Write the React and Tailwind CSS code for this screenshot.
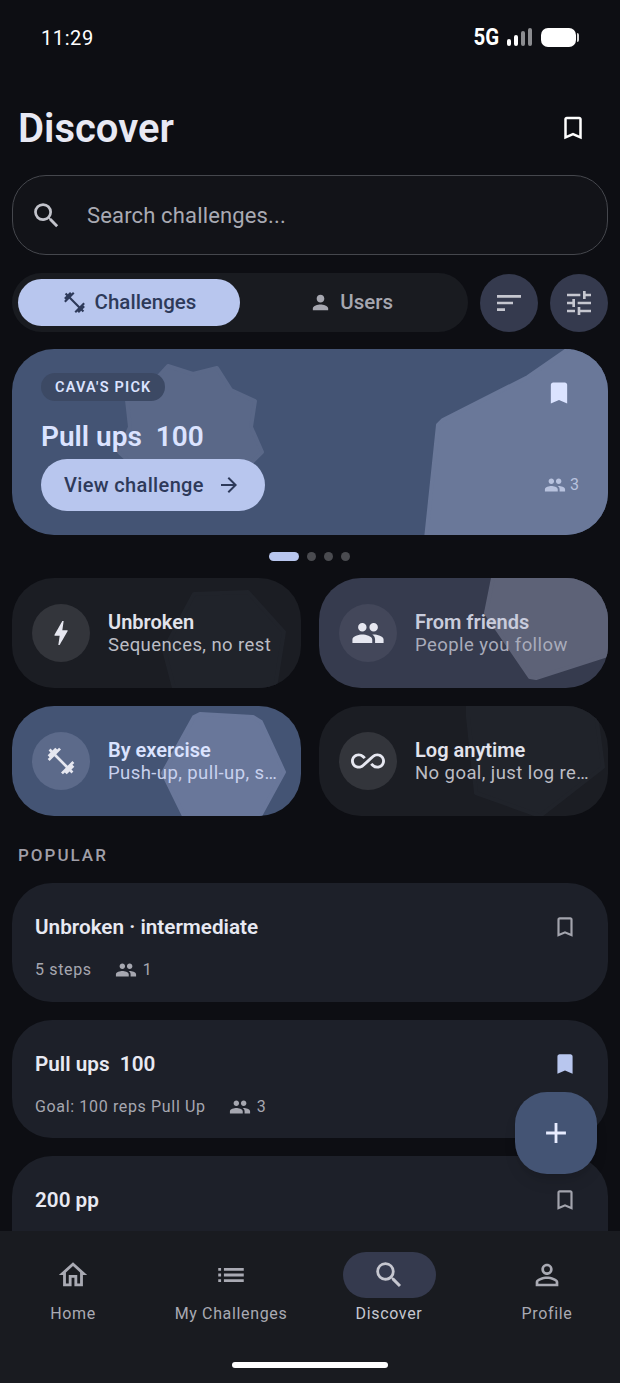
import React from 'react';
import {
  MdBookmarkBorder, MdBookmark, MdSearch, MdFitnessCenter, MdPerson, MdSort, MdTune,
  MdArrowForward, MdPeople, MdBolt, MdAllInclusive, MdAdd, MdOutlineHome, MdList, MdPersonOutline,
} from 'react-icons/md';

const categories = [
  {
    title: 'Unbroken', sub: 'Sequences, no rest', icon: <MdBolt size={32} />,
    card: 'bg-[#1b1d23]', blob: '#20232a', circle: 'bg-[#33353b]', titleCls: 'text-[#e2e3ec]', subCls: 'text-[#bcbdc5]',
    points: '182,16 236,14 272,54 263,110 162,110 152,72',
  },
  {
    title: 'From friends', sub: 'People you follow', icon: <MdPeople size={34} />,
    card: 'bg-[#363b4e]', blob: '#5d6277', circle: 'bg-[#43475a]', titleCls: 'text-[#c9ccdc]', subCls: 'text-[#a9acbb]',
    points: '174,0 289,0 289,77 217,100 211,99 167,35',
  },
  {
    title: 'By exercise', sub: 'Push-up, pull-up, s…', icon: <MdFitnessCenter size={32} />,
    card: 'bg-[#445474]', blob: '#69779a', circle: 'bg-[#5c6a8a]', titleCls: 'text-[#dbe3ff]', subCls: 'text-[#c8d1ee]',
    points: '188,8 241,11 249,16 272,66 248,110 172,110 151,67 182,11',
  },
  {
    title: 'Log anytime', sub: 'No goal, just log re…', icon: <MdAllInclusive size={34} />,
    card: 'bg-[#1b1d23]', blob: '#20232a', circle: 'bg-[#33353b]', titleCls: 'text-[#e2e3ec]', subCls: 'text-[#bcbdc5]',
    points: '149,0 276,0 284,61 221,110 157,87 149,11',
  },
];

const navItems = [
  { label: 'Home', icon: <MdOutlineHome size={34} /> },
  { label: 'My Challenges', icon: <MdList size={34} /> },
  { label: 'Discover', icon: <MdSearch size={34} />, active: true },
  { label: 'Profile', icon: <MdPersonOutline size={34} /> },
];

const Blob = ({ points, fill, width, height }) => (
  <svg className="absolute inset-0" width={width} height={height} viewBox={`0 0 ${width} ${height}`}>
    <polygon points={points} fill={fill} stroke={fill} strokeWidth="4" strokeLinejoin="round" />
  </svg>
);

const CategoryCard = ({ item }) => (
  <div className={`relative h-[110px] rounded-[42px] overflow-hidden ${item.card}`}>
    <Blob points={item.points} fill={item.blob} width={289} height={110} />
    <div className="relative h-full flex items-center pl-5 gap-[18px]">
      <div className={`w-[58px] h-[58px] shrink-0 rounded-full flex items-center justify-center text-[#e6e7f0] ${item.circle}`}>
        {item.icon}
      </div>
      <div className="pt-[1px] whitespace-nowrap">
        <p className={`text-[20px] leading-[23px] font-semibold ${item.titleCls}`}>{item.title}</p>
        <p className={`text-[18.5px] leading-[23px] tracking-[0.42px] ${item.subCls}`}>{item.sub}</p>
      </div>
    </div>
  </div>
);

const ListCard = ({ title, meta, count, saved, height }) => (
  <div className={`rounded-[40px] bg-[#1d2029] pl-[23px] pr-[30px] pt-[28px] shrink-0 ${height}`}>
    <div className="flex items-center justify-between h-[32px]">
      <p className="pt-[2px] text-[20.7px] font-semibold text-[#e8e9f2] whitespace-pre">{title}</p>
      {saved
        ? <MdBookmark size={26} className="text-[#b8c6ee]" />
        : <MdBookmarkBorder size={26} className="text-[#a3a4ad]" />}
    </div>
    {meta && (
      <div className="flex items-center h-[24px] mt-[15px] text-[16px] tracking-[0.65px] text-[#a6a7b0]">
        <span>{meta}</span>
        <MdPeople size={22} className="ml-[23px] mr-[6px]" />
        <span>{count}</span>
      </div>
    )}
  </div>
);

export default function App() {
  return (
    <div className="relative w-[620px] h-[1383px] overflow-hidden flex flex-col bg-[#0d0e13] font-['Roboto',sans-serif]">
      <main className="h-[1231px] shrink-0 overflow-hidden">
        {/* status bar */}
        <div className="h-[74px] flex items-center pl-[41px] pr-[41px] justify-between text-white">
          <span className="pt-[2px] text-[20px] tracking-[0.6px]">11:29</span>
          <div className="flex items-center">
            <span className="text-[24px] font-bold scale-x-[0.85] origin-right">5G</span>
            <svg width="26" height="18" viewBox="0 0 26 18" className="ml-[8px]">
              <rect x="0" y="11" width="4" height="7" rx="2" fill="#fff" />
              <rect x="7" y="7" width="4" height="11" rx="2" fill="#fff" />
              <rect x="14" y="3" width="4" height="15" rx="2" fill="#8b8c90" />
              <rect x="21" y="0" width="4" height="18" rx="2" fill="#8b8c90" />
            </svg>
            <div className="ml-[8px] w-[35px] h-[19px] rounded-[7px] bg-white" />
            <div className="ml-[1px] w-[2px] h-[9px] rounded-r-sm bg-[#d8d8d8]" />
          </div>
        </div>

        {/* header */}
        <div className="mt-[28px] h-[52px] pl-[18px] pr-[32px] flex items-center justify-between">
          <h1 className="pt-[2px] text-[40px] font-semibold text-[#e8e9f4]">Discover</h1>
          <MdBookmarkBorder size={30} className="text-white" />
        </div>

        {/* search */}
        <div className="mt-[21px] mx-[12px] h-[80px] rounded-[34px] border border-[#45474d] bg-[#121318] flex items-center pl-[17px]">
          <MdSearch size={33} className="text-[#c2c3cb]" />
          <span className="ml-[24px] text-[22px] tracking-[0.15px] text-[#a9aab3]">Search challenges...</span>
        </div>

        {/* tabs and filters */}
        <div className="mt-[18px] mx-[12px] flex items-center gap-[12px] h-[59px]">
          <div className="w-[457px] h-[59px] rounded-full bg-[#191b20] p-[6px] flex">
            <div className="w-[222px] h-[47px] rounded-full bg-[#b8c6ee] flex items-center justify-center gap-[8px] text-[#2e3a5a]">
              <MdFitnessCenter size={25} />
              <span className="text-[20.5px] font-medium">Challenges</span>
            </div>
            <div className="flex-1 flex items-center justify-center gap-[8px] text-[#a6a7b0]">
              <MdPerson size={23} />
              <span className="text-[20.5px] font-medium">Users</span>
            </div>
          </div>
          <div className="w-[58px] h-[58px] rounded-full bg-[#353a4e] flex items-center justify-center text-[#c6c7d0]">
            <MdSort size={32} />
          </div>
          <div className="w-[58px] h-[58px] rounded-full bg-[#353a4e] flex items-center justify-center text-[#c6c7d0]">
            <MdTune size={32} />
          </div>
        </div>

        {/* hero */}
        <div className="relative mt-[17px] mx-[12px] h-[186px] rounded-[42px] overflow-hidden bg-[#445474]">
          <Blob points="156,17 181,25 205,19 219,41 243,52 239,78 250,103 238,115 120,115 107,103 118,78 115,51 135,40" fill="#5a6888" width={596} height={186} />
          <Blob points="562,-4 516,28 431,71 426,76 414,190 600,190 600,-4" fill="#6a7899" width={596} height={186} />
          <div className="relative h-full pl-[29px] pr-[29px] pt-[24px] flex flex-col items-start">
            <div className="h-[28px] pt-[1px] px-[14px] rounded-full bg-[#3c4964] flex items-center text-[14.5px] font-semibold tracking-[1.2px] text-[#dbe3ff]">
              CAVA'S PICK
            </div>
            <p className="mt-[18px] h-[36px] text-[28px] leading-[36px] font-semibold text-[#dbe3ff] whitespace-pre">Pull ups  100</p>
            <div className="mt-[4px] w-full flex items-center justify-between">
              <div className="w-[224px] h-[52px] rounded-full bg-[#b8c6ee] flex items-center pl-[23px] text-[#2e3a5a]">
                <span className="text-[20px] font-medium tracking-[0.35px]">View challenge</span>
                <MdArrowForward size={24} className="ml-[13px]" />
              </div>
              <div className="flex items-center gap-[4px] text-[#b8c2de]">
                <MdPeople size={22} />
                <span className="text-[16px]">3</span>
              </div>
            </div>
          </div>
          <MdBookmark size={28} className="absolute right-[35px] top-[30px] text-[#dbe3ff]" />
        </div>

        {/* carousel dots */}
        <div className="mt-[17px] h-[9px] pr-[1px] flex items-center justify-center gap-[8px]">
          <div className="w-[30px] h-[9px] rounded-full bg-[#b8c6ee]" />
          <div className="w-[9px] h-[9px] rounded-full bg-[#4a4b50]" />
          <div className="w-[9px] h-[9px] rounded-full bg-[#4a4b50]" />
          <div className="w-[9px] h-[9px] rounded-full bg-[#4a4b50]" />
        </div>

        {/* categories */}
        <div className="mt-[17px] mx-[12px] grid grid-cols-2 gap-[18px]">
          {categories.map((item) => <CategoryCard key={item.title} item={item} />)}
        </div>

        <p className="mt-[28px] pl-[18px] h-[22px] leading-[22px] text-[17px] font-medium tracking-[2px] text-[#a09fa8]">POPULAR</p>

        {/* popular list */}
        <div className="mt-[17px] mx-[12px] flex flex-col gap-[18px]">
          <ListCard title="Unbroken · intermediate" meta="5 steps" count="1" height="h-[119px]" />
          <ListCard title="Pull ups  100" meta="Goal: 100 reps Pull Up" count="3" saved height="h-[118px]" />
          <ListCard title="200 pp" height="h-[119px]" />
        </div>
      </main>

      {/* fab */}
      <div className="absolute left-[515px] top-[1092px] w-[82px] h-[82px] rounded-[32px] bg-[#445474] flex items-center justify-center text-[#e8ecff] shadow-lg">
        <MdAdd size={34} />
      </div>

      {/* bottom nav */}
      <nav className="flex-1 bg-[#191b20] relative">
        <div className="grid grid-cols-4 mx-[-6px] pt-[21px]">
          {navItems.map((item) => (
            <div key={item.label} className="flex flex-col items-center text-[#a9aab3]">
              <div className={`w-[93px] h-[46px] rounded-full flex items-center justify-center ${item.active ? 'bg-[#353a4e] text-[#c6c7d0]' : ''}`}>
                {item.icon}
              </div>
              <span className={`mt-[5px] text-[16px] leading-[22px] font-normal tracking-[0.65px] ${item.active ? 'text-[#c6c7d0]' : ''}`}>{item.label}</span>
            </div>
          ))}
        </div>
        <div className="absolute left-[232px] top-[131px] w-[156px] h-[6px] rounded-full bg-white" />
      </nav>
    </div>
  );
}
